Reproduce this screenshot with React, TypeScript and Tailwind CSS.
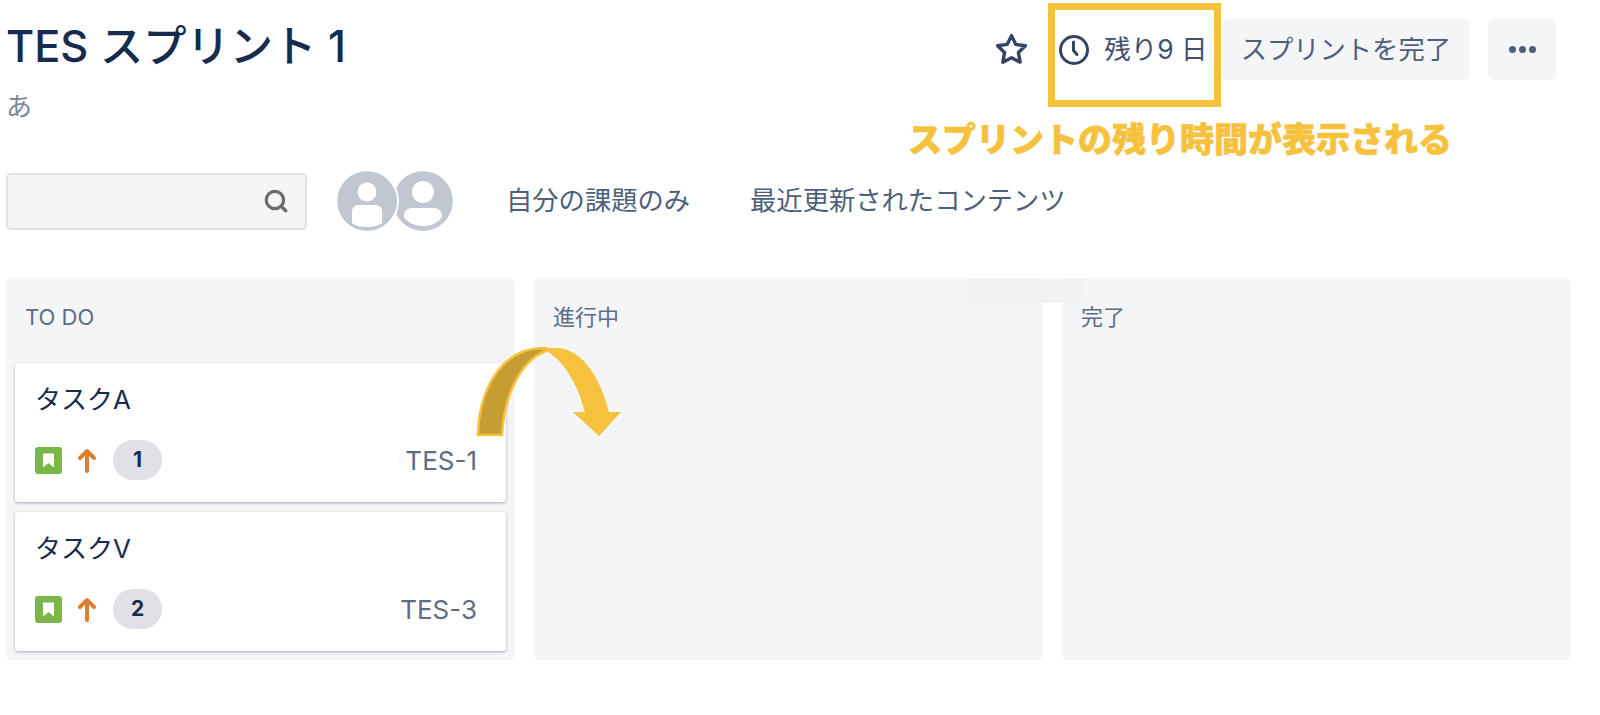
import React from 'react';
import { Search } from 'lucide-react';

const FONT = "font-['Inter','Noto_Sans_CJK_JP',sans-serif]";

const Avatar = ({ variant }: { variant: 'a' | 'b' }) => (
    <svg width="60" height="60" viewBox="0 0 60 60" className="shrink-0 rounded-full">
        <circle cx="30" cy="30" r="30" fill="#c1c7d0" />
        {variant === 'a' ? (
            <>
                <circle cx="30" cy="21" r="9.5" fill="#fff" />
                <path d="M15 41c0-5 3-7 7-7h16c4 0 7 2 7 7v11c-4 3-9 4-15 4s-11-1-15-4z" fill="#fff" />
            </>
        ) : (
            <>
                <circle cx="30" cy="21" r="11" fill="#fff" />
                <path d="M11 46c0-7 4-9 9-9h20c5 0 9 2 9 9-4 6-11 9-19 9s-15-3-19-9z" fill="#fff" />
            </>
        )}
    </svg>
);

const TaskCard = ({ title, count, id }: { title: string; count: number; id: string }) => (
    <div className="h-[139px] rounded-[3px] bg-white px-5 pt-[21px] shadow-[0_1px_3px_rgba(9,30,66,0.35)]">
        <div className="h-[32px] text-[26px] leading-[32px] text-[#172b4d]">{title}</div>
        <div className="mt-[24px] flex h-[40px] items-center">
            <svg width="27" height="27" viewBox="0 0 27 27">
                <rect width="27" height="27" rx="3" fill="#7ab748" />
                <path d="M8 6.500h11v14l-5.500-4.500-5.500 4.500z" fill="#fff" />
            </svg>
            <svg width="20" height="26" viewBox="0 0 20 26" className="ml-[15px]">
                <path d="M10 24V4M3 11l7-7 7 7" fill="none" stroke="#dd7f2e" strokeWidth="4" strokeLinecap="round" strokeLinejoin="round" />
            </svg>
            <span className="ml-[16px] flex h-[40px] w-[49px] items-center justify-center rounded-full bg-[#dfe1e6] text-[21px] font-bold text-[#172b4d]">
                {count}
            </span>
            <span className="ml-auto mr-[9px] text-[26px] text-[#5e6c84]">{id}</span>
        </div>
    </div>
);

const Column = ({ title, children }: { title: string; children?: React.ReactNode }) => (
    <div className="h-[382px] flex-1 rounded-[6px] bg-[#f4f5f7] px-[9px]">
        <div className="px-[10px] pt-[25px] text-[22px] leading-[28px] text-[#5e6c84]">{title}</div>
        <div className="mt-[32px] flex flex-col gap-[10px]">{children}</div>
    </div>
);

export default function App() {
    return (
        <div className={`relative h-[715px] w-[1600px] overflow-hidden bg-white ${FONT}`}>
            {/* breadcrumb of the page above, cut off by the crop */}
            <div className="flex h-[3px] gap-[212px] overflow-hidden pl-[179px] text-[18px] text-[#6b778c]">
                <span className="-mt-[22px] block h-[26px] leading-[26px]">/</span>
                <span className="-mt-[22px] block h-[26px] leading-[26px]">/</span>
            </div>
            <div className="flex items-start justify-between pl-[6px] pr-[44px]">
                <div className="pt-[19px]">
                    <h1 className="text-[43.300px] leading-[48px] font-medium text-[#172b4d]">TES スプリント 1</h1>
                    <p className="mt-[21px] text-[26px] leading-[32px] text-[#7a869a]">あ</p>
                </div>
                <div className="flex items-center pt-[16px] text-[#42526e]">
                    <svg width="37" height="37" viewBox="0 0 24 24" fill="none" stroke="#344563" strokeWidth="2.200" strokeLinejoin="round" className="mr-[28px]">
                        <path d="M12 3l2.800 5.700 6.200.9-4.500 4.400 1.100 6.200-5.600-2.900-5.600 2.900 1.100-6.200L3 9.600l6.200-.9z" />
                    </svg>
                    <svg width="32" height="32" viewBox="0 0 32 32" fill="none" stroke="#344563" strokeWidth="3" strokeLinecap="round" className="mr-[14px]">
                        <circle cx="16" cy="16" r="13.500" />
                        <path d="M15.500 8v8.500l3.500 4" />
                    </svg>
                    <span className="mr-[14px] text-[26.500px]">残り9 日</span>
                    <button className="mr-[18px] h-[61px] rounded-[6px] bg-[#f4f5f7] px-[19px] text-[26.300px] text-[#505f79]">スプリントを完了</button>
                    <button className="flex h-[61px] w-[68px] items-center justify-center gap-[3px] rounded-[6px] bg-[#f4f5f7]">
                        <span className="size-[7px] rounded-full bg-[#505f79]" />
                        <span className="size-[7px] rounded-full bg-[#505f79]" />
                        <span className="size-[7px] rounded-full bg-[#505f79]" />
                    </button>
                </div>
            </div>

            <div className="mt-[48px] flex items-center pl-[6px]">
                <div className="flex h-[57px] w-[301px] items-center justify-end rounded-[5px] border-2 border-[#dfe1e6] bg-[#f4f5f7] pr-[16px]">
                    <Search size={26} strokeWidth={3} className="text-[#6b6b6b]" />
                </div>
                <div className="ml-[30px] flex">
                    <div className="relative z-10 rounded-full ring-2 ring-white">
                        <Avatar variant="a" />
                    </div>
                    <div className="-ml-[4px]">
                        <Avatar variant="b" />
                    </div>
                </div>
                <span className="ml-[53px] text-[26.300px] text-[#505f79]">自分の課題のみ</span>
                <span className="ml-[60px] text-[26.300px] text-[#505f79]">最近更新されたコンテンツ</span>
            </div>

            <div className="mt-[47px] flex gap-[19px] pl-[6px] pr-[29px]">
                <Column title="TO DO">
                    <TaskCard title="タスクA" count={1} id="TES-1" />
                    <TaskCard title="タスクV" count={2} id="TES-3" />
                </Column>
                <Column title="進行中" />
                <Column title="完了" />
            </div>

            {/* annotations on top of the board */}
            <div className="absolute left-[1048px] top-[3px] h-[104px] w-[173px] border-[7px] border-[#f6c23e]" />
            <div className="absolute left-[908px] top-[118px] text-[34px] leading-[44px] font-black whitespace-nowrap text-[#f6c23e] [-webkit-text-stroke:0.6px_#f6c23e]">
                スプリントの残り時間が表示される
            </div>
            <div className="absolute left-[968px] top-[279px] h-[24px] w-[115px] bg-[#f2f2f2]" />
            <svg width="160" height="105" viewBox="0 0 160 105" className="absolute left-[471px] top-[340px]">
                <path d="M7 95C8 50 30 8 73 8c5 0 4 2 2 3C50 20 33 55 31 95z" fill="#c69c33" stroke="#f6c23e" strokeWidth="2.500" />
                <path d="M65 8h20c27 0 45 32 53 64h12l-22 24-26-24h12c-8-30-22-52-39-61z" fill="#f6c23e" />
            </svg>
        </div>
    );
}
